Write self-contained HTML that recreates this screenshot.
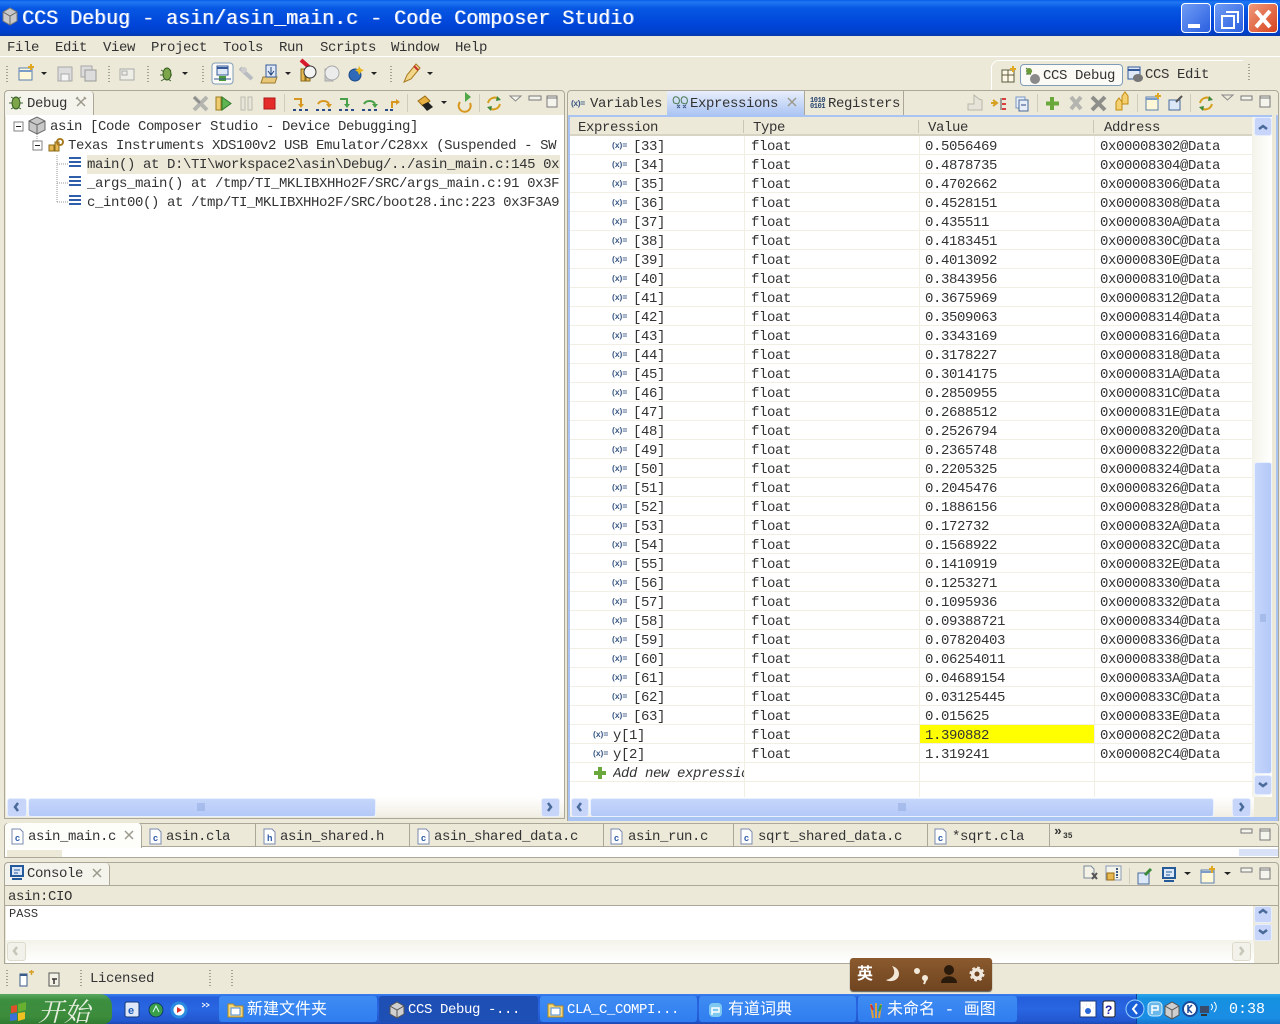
<!DOCTYPE html>
<html><head><meta charset="utf-8"><title>CCS Debug</title>
<style>
html,body{margin:0;padding:0;width:1280px;height:1024px;overflow:hidden;background:#ece9d8}
*{box-sizing:border-box}
body{position:relative;font:14px/16px "Liberation Mono","Noto Sans CJK SC",monospace;letter-spacing:-.4px;color:#333}
.a{position:absolute}
.t{position:absolute;white-space:pre;line-height:16px;height:16px;margin-top:1px}
.title{position:absolute;left:0;top:0;width:1280px;height:36px;background:linear-gradient(#0a5be8 0,#1f78f2 6%,#0758e4 22%,#0044d8 70%,#0040c8 92%,#0a3aa8 100%)}
.rows{position:absolute;left:570px;top:136px;width:682px}
.r{position:relative;height:19px;border-bottom:1px solid #f1efe4}
.r span{position:absolute;top:3px;white-space:pre}
.r i{position:absolute;top:3px;left:42px;font:bold 8.5px/12px "Liberation Sans",sans-serif;letter-spacing:0;color:#3c5a86}
.n{left:63px}.ty{left:181px}.v{left:355px}.ad{left:530px}
.panel{position:absolute;border:1px solid #aca899;background:#ece9d8;border-radius:4px 4px 0 0}
.white{position:absolute;background:#fff}
.sb{position:absolute;background:linear-gradient(#fff,#f1efe4)}
.thumbh{position:absolute;background:linear-gradient(#c6d6fb,#b4c9f8);border:1px solid #e9f0fe;border-radius:3px}
.btn{position:absolute;background:#c6d5f9;border:1px solid #e6edfd;border-radius:3px}
.wb{position:absolute;top:3px;width:30px;height:30px;border:1px solid #fff;border-radius:4px}
.tb{position:absolute;top:996px;height:26px;background:linear-gradient(#3f8cf3,#2f7df0);border-radius:3px;color:#fff;line-height:28px;white-space:pre;font-size:14px}
</style></head><body>

<div class="title"></div>
<div class="t" style="left:22px;top:8px;height:22px;line-height:22px;font-size:20px;letter-spacing:0;color:#fff;text-shadow:1px 0 0 rgba(255,255,255,.5)">CCS Debug - asin/asin_main.c - Code Composer Studio</div>
<div class="wb" style="left:1181px;background:linear-gradient(135deg,#6f9cf5,#2a5fe0)"></div>
<div class="wb" style="left:1214px;background:linear-gradient(135deg,#6f9cf5,#2a5fe0)"></div>
<div class="wb" style="left:1248px;background:linear-gradient(135deg,#ee9a7c,#d8431e)"></div>

<div class="t" style="left:7px;top:39px">File</div>
<div class="t" style="left:55px;top:39px">Edit</div>
<div class="t" style="left:103px;top:39px">View</div>
<div class="t" style="left:151px;top:39px">Project</div>
<div class="t" style="left:223px;top:39px">Tools</div>
<div class="t" style="left:279px;top:39px">Run</div>
<div class="t" style="left:320px;top:39px">Scripts</div>
<div class="t" style="left:391px;top:39px">Window</div>
<div class="t" style="left:455px;top:39px">Help</div>
<div class="a" style="left:0;top:56px;width:1280px;height:1px;background:#fff"></div>

<!-- perspective switcher -->
<div class="a" style="left:991px;top:60px;width:252px;height:30px;border:1px solid #fff;border-bottom:0;border-right:0;border-radius:8px 0 0 0"></div>
<div class="a" style="left:1020px;top:64px;width:103px;height:22px;background:#fbfaf5;border:1px solid #7f9db9;border-radius:4px"></div>
<div class="t" style="left:1043px;top:67px">CCS Debug</div>
<div class="t" style="left:1145px;top:66px">CCS Edit</div>

<!-- left panel -->
<div class="panel" style="left:4px;top:90px;width:561px;height:729px"></div>
<div class="a" style="left:5px;top:91px;width:89px;height:25px;background:#f5f4ec;border-right:1px solid #aca899;border-radius:4px 4px 0 0"></div>
<div class="t" style="left:27px;top:95px">Debug</div>
<div class="white" style="left:6px;top:115px;width:558px;height:682px"></div>
<div class="a" style="left:6px;top:115px;width:554px;height:702px;overflow:hidden">
  <div class="a" style="left:81px;top:40px;width:473px;height:19px;background:#ece9d8"></div>
  <div class="t" style="left:44px;top:3px">asin [Code Composer Studio - Device Debugging]</div>
  <div class="t" style="left:62px;top:22px">Texas Instruments XDS100v2 USB Emulator/C28xx (Suspended - SW</div>
  <div class="t" style="left:81px;top:41px">main() at D:\TI\workspace2\asin\Debug/../asin_main.c:145 0x</div>
  <div class="t" style="left:81px;top:60px">_args_main() at /tmp/TI_MKLIBXHHo2F/SRC/args_main.c:91 0x3F</div>
  <div class="t" style="left:81px;top:79px">c_int00() at /tmp/TI_MKLIBXHHo2F/SRC/boot28.inc:223 0x3F3A9</div>
</div>
<div class="sb" style="left:6px;top:797px;width:558px;height:20px"></div>
<div class="btn" style="left:7px;top:798px;width:20px;height:19px"></div>
<div class="thumbh" style="left:28px;top:798px;width:348px;height:19px"></div>
<div class="btn" style="left:541px;top:798px;width:19px;height:19px"></div>

<!-- right panel -->
<div class="panel" style="left:567px;top:90px;width:712px;height:731px;border-color:#aca899"></div>
<div class="a" style="left:667px;top:91px;width:138px;height:25px;background:linear-gradient(#e9effc,#a9c3f3);border-right:1px solid #aca899"></div>
<div class="a" style="left:805px;top:91px;width:99px;height:24px;border-right:1px solid #aca899"></div>
<div class="a" style="left:568px;top:115px;width:710px;height:2px;background:#a9c3f3"></div>
<div class="a" style="left:568px;top:115px;width:2px;height:706px;background:#a9c3f3"></div>
<div class="a" style="left:1272px;top:115px;width:6px;height:706px;background:#ece9d8;border-right:2px solid #a9c3f3"></div>
<div class="a" style="left:568px;top:817px;width:710px;height:4px;background:#a9c3f3"></div>
<div class="t" style="left:590px;top:95px">Variables</div>
<div class="t" style="left:690px;top:95px">Expressions</div>
<div class="t" style="left:828px;top:95px">Registers</div>

<div class="white" style="left:570px;top:117px;width:702px;height:680px"></div>
<div class="a" style="left:570px;top:117px;width:683px;height:19px;background:#ece9d8;border-bottom:2px solid #d8d4c4"></div>
<div class="t" style="left:578px;top:119px">Expression</div>
<div class="t" style="left:753px;top:119px">Type</div>
<div class="t" style="left:928px;top:119px">Value</div>
<div class="t" style="left:1104px;top:119px">Address</div>
<div class="a" style="left:743px;top:120px;width:1px;height:13px;background:#cbc7b8"></div>
<div class="a" style="left:918px;top:120px;width:1px;height:13px;background:#cbc7b8"></div>
<div class="a" style="left:1093px;top:120px;width:1px;height:13px;background:#cbc7b8"></div>

<div class="a" style="left:920px;top:725px;width:174px;height:18px;background:#ff0"></div>
<div class="rows">
<div class="r"><i>(x)=</i><span class="n">[33]</span><span class="ty">float</span><span class="v">0.5056469</span><span class="ad">0x00008302@Data</span></div>
<div class="r"><i>(x)=</i><span class="n">[34]</span><span class="ty">float</span><span class="v">0.4878735</span><span class="ad">0x00008304@Data</span></div>
<div class="r"><i>(x)=</i><span class="n">[35]</span><span class="ty">float</span><span class="v">0.4702662</span><span class="ad">0x00008306@Data</span></div>
<div class="r"><i>(x)=</i><span class="n">[36]</span><span class="ty">float</span><span class="v">0.4528151</span><span class="ad">0x00008308@Data</span></div>
<div class="r"><i>(x)=</i><span class="n">[37]</span><span class="ty">float</span><span class="v">0.435511</span><span class="ad">0x0000830A@Data</span></div>
<div class="r"><i>(x)=</i><span class="n">[38]</span><span class="ty">float</span><span class="v">0.4183451</span><span class="ad">0x0000830C@Data</span></div>
<div class="r"><i>(x)=</i><span class="n">[39]</span><span class="ty">float</span><span class="v">0.4013092</span><span class="ad">0x0000830E@Data</span></div>
<div class="r"><i>(x)=</i><span class="n">[40]</span><span class="ty">float</span><span class="v">0.3843956</span><span class="ad">0x00008310@Data</span></div>
<div class="r"><i>(x)=</i><span class="n">[41]</span><span class="ty">float</span><span class="v">0.3675969</span><span class="ad">0x00008312@Data</span></div>
<div class="r"><i>(x)=</i><span class="n">[42]</span><span class="ty">float</span><span class="v">0.3509063</span><span class="ad">0x00008314@Data</span></div>
<div class="r"><i>(x)=</i><span class="n">[43]</span><span class="ty">float</span><span class="v">0.3343169</span><span class="ad">0x00008316@Data</span></div>
<div class="r"><i>(x)=</i><span class="n">[44]</span><span class="ty">float</span><span class="v">0.3178227</span><span class="ad">0x00008318@Data</span></div>
<div class="r"><i>(x)=</i><span class="n">[45]</span><span class="ty">float</span><span class="v">0.3014175</span><span class="ad">0x0000831A@Data</span></div>
<div class="r"><i>(x)=</i><span class="n">[46]</span><span class="ty">float</span><span class="v">0.2850955</span><span class="ad">0x0000831C@Data</span></div>
<div class="r"><i>(x)=</i><span class="n">[47]</span><span class="ty">float</span><span class="v">0.2688512</span><span class="ad">0x0000831E@Data</span></div>
<div class="r"><i>(x)=</i><span class="n">[48]</span><span class="ty">float</span><span class="v">0.2526794</span><span class="ad">0x00008320@Data</span></div>
<div class="r"><i>(x)=</i><span class="n">[49]</span><span class="ty">float</span><span class="v">0.2365748</span><span class="ad">0x00008322@Data</span></div>
<div class="r"><i>(x)=</i><span class="n">[50]</span><span class="ty">float</span><span class="v">0.2205325</span><span class="ad">0x00008324@Data</span></div>
<div class="r"><i>(x)=</i><span class="n">[51]</span><span class="ty">float</span><span class="v">0.2045476</span><span class="ad">0x00008326@Data</span></div>
<div class="r"><i>(x)=</i><span class="n">[52]</span><span class="ty">float</span><span class="v">0.1886156</span><span class="ad">0x00008328@Data</span></div>
<div class="r"><i>(x)=</i><span class="n">[53]</span><span class="ty">float</span><span class="v">0.172732</span><span class="ad">0x0000832A@Data</span></div>
<div class="r"><i>(x)=</i><span class="n">[54]</span><span class="ty">float</span><span class="v">0.1568922</span><span class="ad">0x0000832C@Data</span></div>
<div class="r"><i>(x)=</i><span class="n">[55]</span><span class="ty">float</span><span class="v">0.1410919</span><span class="ad">0x0000832E@Data</span></div>
<div class="r"><i>(x)=</i><span class="n">[56]</span><span class="ty">float</span><span class="v">0.1253271</span><span class="ad">0x00008330@Data</span></div>
<div class="r"><i>(x)=</i><span class="n">[57]</span><span class="ty">float</span><span class="v">0.1095936</span><span class="ad">0x00008332@Data</span></div>
<div class="r"><i>(x)=</i><span class="n">[58]</span><span class="ty">float</span><span class="v">0.09388721</span><span class="ad">0x00008334@Data</span></div>
<div class="r"><i>(x)=</i><span class="n">[59]</span><span class="ty">float</span><span class="v">0.07820403</span><span class="ad">0x00008336@Data</span></div>
<div class="r"><i>(x)=</i><span class="n">[60]</span><span class="ty">float</span><span class="v">0.06254011</span><span class="ad">0x00008338@Data</span></div>
<div class="r"><i>(x)=</i><span class="n">[61]</span><span class="ty">float</span><span class="v">0.04689154</span><span class="ad">0x0000833A@Data</span></div>
<div class="r"><i>(x)=</i><span class="n">[62]</span><span class="ty">float</span><span class="v">0.03125445</span><span class="ad">0x0000833C@Data</span></div>
<div class="r"><i>(x)=</i><span class="n">[63]</span><span class="ty">float</span><span class="v">0.015625</span><span class="ad">0x0000833E@Data</span></div>
<div class="r"><i style="left:23px">(x)=</i><span style="left:43px">y[1]</span><span class="ty">float</span><span class="v">1.390882</span><span class="ad">0x000082C2@Data</span></div>
<div class="r"><i style="left:23px">(x)=</i><span style="left:43px">y[2]</span><span class="ty">float</span><span class="v">1.319241</span><span class="ad">0x000082C4@Data</span></div>
<div class="r"><span style="left:43px;width:131px;overflow:hidden;font-style:italic">Add new expression</span></div>
<div class="r" style="border:0"></div>
</div>
<div class="a" style="left:744px;top:136px;width:1px;height:661px;background:#f1efe4"></div>
<div class="a" style="left:919px;top:136px;width:1px;height:661px;background:#f1efe4"></div>
<div class="a" style="left:1094px;top:136px;width:1px;height:661px;background:#f1efe4"></div>

<div class="a" style="left:1252px;top:117px;width:20px;height:680px;background:linear-gradient(90deg,#f4f3ea,#fff)"></div>
<div class="btn" style="left:1254px;top:117px;width:18px;height:19px"></div>
<div class="a" style="left:1254px;top:462px;width:18px;height:312px;background:linear-gradient(90deg,#c6d6fb,#b4c9f8);border:1px solid #e9f0fe;border-radius:3px"></div>
<div class="btn" style="left:1254px;top:775px;width:18px;height:20px"></div>

<div class="sb" style="left:570px;top:797px;width:684px;height:20px"></div>
<div class="btn" style="left:571px;top:798px;width:18px;height:19px"></div>
<div class="thumbh" style="left:590px;top:798px;width:624px;height:19px"></div>
<div class="btn" style="left:1232px;top:798px;width:19px;height:19px"></div>

<!-- editor tabs -->
<div class="panel" style="left:4px;top:823px;width:1275px;height:35px;background:#fff"></div>
<div class="a" style="left:5px;top:824px;width:1273px;height:23px;background:#ece9d8;border-bottom:1px solid #aca899;border-radius:4px 4px 0 0"></div>
<div class="a" style="left:5px;top:823px;width:137px;height:25px;background:#fdfdfa;border-right:1px solid #aca899;border-radius:4px 4px 0 0"></div>
<div class="a" style="left:7px;top:850px;width:55px;height:7px;background:#ece9d8"></div>
<div class="a" style="left:1239px;top:849px;width:39px;height:7px;background:#d9e2f7"></div>
<div class="a" style="left:255px;top:824px;width:1px;height:23px;background:#aca899"></div>
<div class="a" style="left:409px;top:824px;width:1px;height:23px;background:#aca899"></div>
<div class="a" style="left:603px;top:824px;width:1px;height:23px;background:#aca899"></div>
<div class="a" style="left:733px;top:824px;width:1px;height:23px;background:#aca899"></div>
<div class="a" style="left:927px;top:824px;width:1px;height:23px;background:#aca899"></div>
<div class="a" style="left:1049px;top:824px;width:1px;height:23px;background:#aca899"></div>
<div class="t" style="left:28px;top:828px">asin_main.c</div>
<div class="t" style="left:166px;top:828px">asin.cla</div>
<div class="t" style="left:280px;top:828px">asin_shared.h</div>
<div class="t" style="left:434px;top:828px">asin_shared_data.c</div>
<div class="t" style="left:628px;top:828px">asin_run.c</div>
<div class="t" style="left:758px;top:828px">sqrt_shared_data.c</div>
<div class="t" style="left:952px;top:828px">*sqrt.cla</div>
<div class="t" style="left:1054px;top:823px;font-size:13px;font-weight:bold;letter-spacing:0">»</div>
<div class="t" style="left:1063px;top:828px;font-size:8px;font-weight:bold;letter-spacing:0">35</div>

<!-- console -->
<div class="panel" style="left:4px;top:862px;width:1275px;height:102px"></div>
<div class="a" style="left:5px;top:863px;width:105px;height:23px;background:#f5f4ec;border-right:1px solid #aca899;border-bottom:1px solid #aca899;border-radius:4px 4px 0 0"></div>
<div class="a" style="left:110px;top:885px;width:1168px;height:1px;background:#aca899"></div>
<div class="t" style="left:27px;top:865px">Console</div>
<div class="t" style="left:8px;top:888px">asin:CIO</div>
<div class="a" style="left:5px;top:905px;width:1273px;height:1px;background:#aca899"></div>
<div class="white" style="left:6px;top:906px;width:1247px;height:34px"></div>
<div class="t" style="left:9px;top:905px;font-size:12px;letter-spacing:.1px">PASS</div>
<div class="a" style="left:6px;top:940px;width:1248px;height:23px;background:linear-gradient(#f4f3ea,#fff)"></div>
<div class="a" style="left:7px;top:942px;width:19px;height:19px;background:#f3f2ea;border:1px solid #dedbcb;border-radius:3px"></div>
<div class="a" style="left:1232px;top:942px;width:19px;height:19px;background:#f3f2ea;border:1px solid #dedbcb;border-radius:3px"></div>
<div class="btn" style="left:1254px;top:906px;width:18px;height:17px"></div>
<div class="btn" style="left:1254px;top:924px;width:18px;height:17px"></div>

<!-- status -->
<div class="t" style="left:90px;top:970px">Licensed</div>

<!-- IME -->
<div class="a" style="left:850px;top:958px;width:142px;height:33px;background:linear-gradient(#8b5a2e,#6f4420);border-radius:3px;box-shadow:0 1px 1px #555"></div>
<div class="t" style="left:857px;top:966px;font-size:16px;color:#fff;letter-spacing:0;font-weight:bold">英</div>

<!-- taskbar -->
<div class="a" style="left:0;top:994px;width:1280px;height:30px;background:linear-gradient(#3b82f0 0,#245edb 12%,#2a66e2 50%,#2257cf 90%,#1c48b0 100%)"></div>
<div class="a" style="left:0;top:994px;width:112px;height:30px;background:linear-gradient(#5aa860,#3c8f3f 20%,#3c8c3c 75%,#2f7a30);border-radius:0 12px 8px 0"></div>
<div class="t" style="left:38px;top:996px;height:28px;line-height:28px;font-size:26px;letter-spacing:0;color:#e8efe0;font-style:italic;font-family:'Noto Serif CJK SC',serif">开始</div>
<div class="tb" style="left:219px;width:158px;padding-left:28px;font-size:16px;letter-spacing:0">新建文件夹</div>
<div class="tb" style="left:379px;width:159px;padding-left:29px;background:#1d4fb5">CCS Debug -...</div>
<div class="tb" style="left:540px;width:157px;padding-left:27px">CLA_C_COMPI...</div>
<div class="tb" style="left:699px;width:157px;padding-left:29px;font-size:16px;letter-spacing:0">有道词典</div>
<div class="tb" style="left:858px;width:159px;padding-left:29px;font-size:16px;letter-spacing:0">未命名 - 画图</div>
<div class="a" style="left:1136px;top:994px;width:144px;height:30px;background:linear-gradient(#2aa6ee,#1590e0 15%,#1a8ee4 80%,#1673cc);border-left:1px solid #0e3f9a"></div>
<div class="t" style="left:1229px;top:1001px;color:#fff;letter-spacing:0;font-size:15px">0:38</div>

<!-- icons overlay -->
<svg class="a" style="left:0;top:0" width="1280" height="1024" viewBox="0 0 1280 1024" fill="none">
 <!-- app icon -->
 <path d="M3 12l7-4 7 4v9l-7 4-7-4z" fill="#c9c9c9" stroke="#777"/><path d="M3 12l7 4 7-4M10 16v9" stroke="#666"/>
 <!-- window buttons -->
 <rect x="1188" y="24" width="12" height="4" fill="#fff"/>
 <rect x="1222" y="16" width="12" height="12" stroke="#fff" stroke-width="2"/><path d="M1226 12h12v11" stroke="#fff" stroke-width="2"/>
 <path d="M1256 11l14 16M1270 11l-14 16" stroke="#fff" stroke-width="4"/>

 <!-- grips -->
 <g stroke="#a5a291" stroke-dasharray="1 2" stroke-width="2">
  <path d="M7 66v16M109 66v16M148 66v16M203 66v16M391 66v16M1249 64v16M7 970v16M81 970v16M210 970v16M232 970v16"/>
 </g>

 <!-- main toolbar -->
 <rect x="19" y="68" width="13" height="12" fill="#fff8d8" stroke="#5a7fb0"/><path d="M19 71h13" stroke="#7b9cc8" stroke-width="2"/><path d="M31 64v6M28 67h6" stroke="#e0a820" stroke-width="2"/>
 <path d="M41 72h6l-3 3z" fill="#222"/>
 <rect x="58" y="67" width="14" height="14" fill="#dcdcdc" stroke="#a8a8a8"/><rect x="61" y="74" width="8" height="7" fill="#f4f4f4" stroke="#aaa"/>
 <rect x="81" y="66" width="11" height="11" fill="#dcdcdc" stroke="#a8a8a8"/><rect x="85" y="70" width="11" height="11" fill="#dcdcdc" stroke="#9a9a9a"/>
 <rect x="120" y="69" width="14" height="11" fill="#efeee6" stroke="#aaa"/><rect x="122" y="71" width="5" height="4" stroke="#aaa"/>
 <path d="M161 70l5 3 5-3M160 75h12M161 81l5-3 5 3" stroke="#3f6a2e"/><ellipse cx="167" cy="74" rx="4" ry="6" fill="#7da64a" stroke="#2f5a1f"/>
 <path d="M182 72h6l-3 3z" fill="#222"/>
 <rect x="212" y="63" width="21" height="21" rx="3" fill="#fbfaf5" stroke="#7f9db9"/>
 <rect x="217" y="66" width="11" height="9" fill="#dfe8f6" stroke="#345a9a"/><path d="M217 68h11" stroke="#345a9a" stroke-width="2"/><rect x="219" y="76" width="7" height="5" fill="#4a9a3a"/><path d="M214 79h17" stroke="#345a9a"/>
 <path d="M240 68l12 11" stroke="#b8bcc0" stroke-width="4"/><circle cx="244" cy="70" r="3" fill="#ccc"/>
 <path d="M263 77h14l-2 6h-14z" fill="#e8c878" stroke="#9b7b2a"/><rect x="266" y="65" width="10" height="12" fill="#dfe8f6" stroke="#345a9a"/><path d="M271 67v7M268 71l3 4 3-4" stroke="#20407a"/>
 <path d="M285 72h6l-3 3z" fill="#222"/>
 <path d="M301 60l9 8" stroke="#d8192c" stroke-width="4"/><rect x="301" y="69" width="4" height="12" fill="#e8b850" stroke="#8a6a1a"/><rect x="306" y="73" width="4" height="8" fill="#e8b850" stroke="#8a6a1a"/><circle cx="310" cy="72" r="6" fill="#f4f4f4" stroke="#333"/>
 <rect x="325" y="69" width="8" height="12" fill="#c8c8c8" stroke="#aaa"/><circle cx="332" cy="73" r="7" fill="#ececec" stroke="#a8a8a8"/>
 <circle cx="355" cy="75" r="6" fill="#2e6ab8" stroke="#1e4a88"/><path d="M359 66l2 3 3 1-3 2-2 3-1-3-3-2 3-1z" fill="#e8b820"/>
 <path d="M371 72h6l-3 3z" fill="#222"/>
 <path d="M404 82l7-3 9-11-4-4-9 11z" fill="#f2d68a" stroke="#a87a20"/><path d="M414 66l4 4" stroke="#c83030" stroke-width="2"/>
 <path d="M427 72h6l-3 3z" fill="#222"/>

 <!-- perspective icons -->
 <rect x="1002" y="70" width="12" height="12" fill="#fff8e8" stroke="#5a5a3a"/><path d="M1002 75h12M1008 70v12" stroke="#5a5a3a"/><path d="M1013 66v6M1010 69h6" stroke="#e0a820" stroke-width="2"/>
 <path d="M1026 68l6 4M1026 74h5" stroke="#3f6a2e"/><circle cx="1029" cy="71" r="3" fill="#6d9a3a"/><ellipse cx="1035" cy="79" rx="5" ry="5" fill="#8a8a8a"/>
 <rect x="1128" y="67" width="12" height="12" fill="#dfe8f6" stroke="#345a9a"/><path d="M1128 70h12" stroke="#345a9a" stroke-width="2"/><ellipse cx="1138" cy="78" rx="5" ry="4" fill="#777"/>

 <!-- debug tab + toolbar -->
 <path d="M11 97l5 3 5-3M9 103h14M11 109l5-3 5 3" stroke="#3f6a2e"/><ellipse cx="16" cy="103" rx="4" ry="6" fill="#7da64a" stroke="#2f5a1f"/>
 <g stroke="#9c9a8c"><path d="M77 98l8 8M85 98l-8 8M78 97l-2 2M84 97l2 2" stroke-width="1.500"/></g>
 <path d="M194 97l13 13M207 97l-13 13" stroke="#b5b5b0" stroke-width="4"/><path d="M194 97l6 6" stroke="#8a8a88" stroke-width="2"/>
 <rect x="216" y="97" width="5" height="13" fill="#f0cc70" stroke="#9a7a20"/><path d="M222 97l9 6.500-9 6.500z" fill="#5eb552" stroke="#2d7a2a"/>
 <rect x="241" y="97" width="4" height="13" fill="#e8e6da" stroke="#bdbbad"/><rect x="248" y="97" width="4" height="13" fill="#e8e6da" stroke="#bdbbad"/>
 <rect x="264" y="98" width="11" height="11" fill="#e52a2a" stroke="#b01818"/>
 <g stroke-width="2">
  <path d="M294 99h7v6" stroke="#d89820"/><path d="M298 104l3 4 3-4z" fill="#d89820"/><path d="M293 110h3M299 110h3M305 110h3" stroke="#2a4a88"/>
  <path d="M318 104a6 5 0 0 1 11 0" stroke="#d89820"/><path d="M326 104l3 4 3-4z" fill="#d89820"/><path d="M316 110h3M322 110h3M328 110h3" stroke="#2a4a88"/>
  <path d="M340 99h7v6" stroke="#48a048"/><path d="M344 104l3 4 3-4z" fill="#48a048"/><path d="M339 110h3M345 110h3M351 110h3" stroke="#2a4a88"/>
  <path d="M364 104a6 5 0 0 1 11 0" stroke="#48a048"/><path d="M372 104l3 4 3-4z" fill="#48a048"/><path d="M362 110h3M368 110h3M374 110h3" stroke="#2a4a88"/>
  <path d="M392 108v-6h6" stroke="#d89820"/><path d="M396 99l4 3-4 3z" fill="#d89820"/><path d="M385 110h3M390 110h3" stroke="#2a4a88"/>
 </g>
 <path d="M284.500 94v18M407.500 94v18M479.500 94v18M1037.500 94v18M1137.500 94v18M1190.500 94v18" stroke="#cfccbb"/>
 <path d="M418 101l7-5 5 5-7 5z" fill="#e8b040" stroke="#9a6a10"/><path d="M422 105l6-3 5 5-6 4z" fill="#222"/>
 <path d="M441 101h6l-3 3z" fill="#222"/>
 <path d="M465 92v10l6-5z" fill="#50a848"/><path d="M460 102a6 6 0 1 0 10 1" stroke="#d89820" stroke-width="2"/>
 <g stroke="#d8a020" stroke-width="2"><path d="M488 103a7 7 0 0 1 11-4"/><path d="M500 104a7 7 0 0 1-11 4"/></g><path d="M497 96l4 4-5 1zM491 111l-4-4 5-1z" fill="#3f8a3a"/>
 <path d="M510 96h11l-5.500 5z" stroke="#888" fill="#f5f4ec"/>
 <rect x="529" y="96" width="12" height="4" fill="#f5f4ec" stroke="#777"/>
 <rect x="547" y="96" width="10" height="11" fill="#f5f4ec" stroke="#777"/><path d="M547 98h10" stroke="#777"/>

 <!-- tree -->
 <path d="M37 134v7M57 155v47M57 164h11M57 183h11M57 202h11" stroke="#9a9a9a" stroke-dasharray="1 1"/>
 <rect x="14" y="122" width="9" height="9" fill="#fff" stroke="#808080"/><path d="M16 126.500h5" stroke="#222"/>
 <rect x="33" y="141" width="9" height="9" fill="#fff" stroke="#808080"/><path d="M35 145.500h5" stroke="#222"/>
 <path d="M29 121l8-4 8 4v9l-8 4-8-4z" fill="#c8c8c8" stroke="#6a6a6a"/><path d="M29 121l8 4 8-4M37 125v9" stroke="#666"/>
 <rect x="49" y="145" width="5" height="6" fill="#e8b850" stroke="#8a6a1a"/><rect x="55" y="142" width="4" height="9" fill="#e8b850" stroke="#8a6a1a"/><circle cx="60" cy="142" r="3" stroke="#a87a20" stroke-width="2"/>
 <g stroke="#2e5fa8" stroke-width="2"><path d="M69 158h12M69 162h12M69 166h12"/><path d="M69 177h12M69 181h12M69 185h12"/><path d="M69 196h12M69 200h12M69 204h12"/></g>

 <!-- scrollbars -->
 <g stroke="#4a6a9a" stroke-width="2.500"><path d="M18 803l-3 4 3 4M548 803l3 4-3 4M581 803l-3 4 3 4M1240 803l3 4-3 4M1259 129l4-3 4 3M1259 783l4 3 4-3M1259 913l4-3 4 3M1259 930l4 3 4-3"/></g>
 <path d="M17 947l-3 4 3 4M1240 947l3 4-3 4" stroke="#c8c6b8" stroke-width="2.500"/>
 <path d="M198 803v8M200 803v8M202 803v8M204 803v8M899 803v8M901 803v8M903 803v8M905 803v8M1260 615h6M1260 617h6M1260 619h6M1260 621h6" stroke="#8fa8dc"/>

 <!-- right tabs -->
 <text x="571" y="106" font-family="Liberation Sans,sans-serif" font-size="8.500" font-weight="bold" fill="#3c5a86">(x)=</text>
 <path d="M674 103c-2-4 0-7 3-6s3 5 1 7zM682 103c-2-4 0-7 3-6s3 5 1 7z" stroke="#4a7a50"/><path d="M677 105l3 3M680 105l-3 3M683 105l3 3M686 105l-3 3" stroke="#3c5a86"/>
 <g stroke="#9c9a8c" stroke-width="1.500"><path d="M788 98l8 8M796 98l-8 8"/></g>
 <text x="810" y="102" font-family="Liberation Mono,monospace" font-size="7" font-weight="bold" fill="#24406e">1010</text>
 <text x="810" y="108" font-family="Liberation Mono,monospace" font-size="7" font-weight="bold" fill="#24406e">0101</text>

 <!-- right toolbar -->
 <path d="M968 104h6v-9l5 4 3 1v10h-14z" fill="#e6e4d8" stroke="#b8b6aa"/>
 <path d="M991 103h5M993 100l4 3-4 3" stroke="#d8a020" stroke-width="2"/><path d="M1001 98v12" stroke="#555"/><path d="M1002 99h4M1002 104h4M1002 109h4" stroke="#d84040" stroke-width="2"/>
 <rect x="1016" y="97" width="9" height="11" fill="#e8eef8" stroke="#7a98c4"/><rect x="1019" y="100" width="9" height="11" fill="#e8eef8" stroke="#4a6a9a"/><path d="M1021 105h5" stroke="#2a4a88"/>
 <path d="M1052 97v13M1046 103.500h13" stroke="#6aa83c" stroke-width="4"/>
 <path d="M1071 97l10 12M1081 97l-10 12" stroke="#b5b5b0" stroke-width="4"/>
 <path d="M1092 97l13 13M1105 97l-13 13" stroke="#8e8e8a" stroke-width="4"/>
 <path d="M1116 110v-8l3-4 3 4v8zM1122 104v-8l3-4 3 4v8z" fill="#f4d070" stroke="#c08a10"/>
 <rect x="1146" y="97" width="12" height="13" fill="#fff8d8" stroke="#5a7fb0"/><path d="M1146 99h12" stroke="#7b9cc8" stroke-width="2"/><path d="M1158 93v6M1155 96h6" stroke="#e0a820" stroke-width="2"/>
 <rect x="1169" y="100" width="11" height="10" fill="#dce8f8" stroke="#4a6a9a"/><path d="M1176 102l6-6" stroke="#555" stroke-width="2"/>
 <g stroke="#d8a020" stroke-width="2"><path d="M1200 103a7 7 0 0 1 11-4"/><path d="M1212 104a7 7 0 0 1-11 4"/></g><path d="M1209 96l4 4-5 1zM1203 111l-4-4 5-1z" fill="#3f8a3a"/>
 <path d="M1222 95h11l-5.500 5z" stroke="#888" fill="#ece9d8"/>
 <rect x="1241" y="96" width="11" height="4" fill="#f5f4ec" stroke="#777"/>
 <rect x="1260" y="96" width="10" height="11" fill="#f5f4ec" stroke="#777"/><path d="M1260 98h10" stroke="#777"/>

 <!-- add expression plus -->
 <path d="M600 767v12M594 773h12" stroke="#6aa83c" stroke-width="4"/>

 <!-- file icons in tabs -->
 <g fill="#fff" stroke="#7a8ab0">
  <path d="M12 829h8l3 3v12h-11z"/><path d="M150 829h8l3 3v12h-11z"/><path d="M264 829h8l3 3v12h-11z"/><path d="M418 829h8l3 3v12h-11z"/><path d="M611 829h8l3 3v12h-11z"/><path d="M741 829h8l3 3v12h-11z"/><path d="M935 829h8l3 3v12h-11z"/>
 </g>
 <g font-family="Liberation Sans,sans-serif" font-size="9" font-weight="bold" fill="#2a5aa8">
  <text x="15" y="841">c</text><text x="153" y="841">c</text><text x="267" y="841">h</text><text x="421" y="841">c</text><text x="614" y="841">c</text><text x="744" y="841">c</text><text x="938" y="841">c</text>
 </g>
 <g stroke="#9c9a8c" stroke-width="1.500"><path d="M125 831l8 8M133 831l-8 8"/><path d="M93 869l8 8M101 869l-8 8"/></g>
 <rect x="1241" y="829" width="11" height="4" fill="#f5f4ec" stroke="#777"/><rect x="1260" y="829" width="10" height="11" fill="#f5f4ec" stroke="#777"/><path d="M1260 831h10" stroke="#777"/>
 <rect x="1241" y="868" width="11" height="4" fill="#f5f4ec" stroke="#777"/><rect x="1260" y="868" width="10" height="11" fill="#f5f4ec" stroke="#777"/><path d="M1260 870h10" stroke="#777"/>

 <!-- console icons -->
 <rect x="11" y="866" width="12" height="10" fill="#dce8f8" stroke="#245a9a" stroke-width="2"/><path d="M14 870h6M14 873h4" stroke="#245a9a"/><path d="M12 879h10" stroke="#245a9a" stroke-width="2"/>
 <path d="M1084 866h7l3 3v9h-10z" fill="#f4f2e6" stroke="#7a8a9a"/><path d="M1092 873l5 6M1097 873l-5 6" stroke="#555" stroke-width="2"/>
 <rect x="1106" y="866" width="15" height="14" fill="#f4f4ea" stroke="#8a9ab8"/><rect x="1107" y="873" width="7" height="7" fill="#e8b850" stroke="#9a6a10"/><path d="M1117 868v10" stroke="#3c5a86" stroke-dasharray="2 1" stroke-width="2"/>
 <path d="M1129.500 868v16" stroke="#cfccbb"/>
 <rect x="1138" y="873" width="11" height="11" fill="#dce8f8" stroke="#4a6a9a"/><path d="M1145 875l6-6" stroke="#3a8a3a" stroke-width="3"/>
 <rect x="1163" y="868" width="12" height="10" fill="#dce8f8" stroke="#245a9a" stroke-width="2"/><path d="M1166 872h6M1166 875h4" stroke="#245a9a"/><path d="M1164 881h10" stroke="#245a9a" stroke-width="2"/>
 <path d="M1184 872h7l-3.500 3z" fill="#222"/>
 <rect x="1201" y="870" width="13" height="13" fill="#fff8d8" stroke="#5a7fb0"/><path d="M1201 872h13" stroke="#7b9cc8" stroke-width="2"/><path d="M1212 866v7M1209 869h6" stroke="#e0a820" stroke-width="2"/>
 <path d="M1224 872h7l-3.500 3z" fill="#222"/>

 <!-- status icons -->
 <rect x="20" y="974" width="7" height="12" fill="#fff" stroke="#3a5a8a"/><path d="M20 975h7" stroke="#3a5a8a" stroke-width="2"/><path d="M29 972h5M31.500 970v5" stroke="#d8a020" stroke-width="1.500"/>
 <rect x="49" y="973" width="10" height="13" fill="#f4f2e6" stroke="#555"/><path d="M52 979h5M54 979v5" stroke="#333" stroke-width="1.500"/>

 <!-- IME -->
 <path d="M892 966c4 5 3 12-6 14 5 3 13 0 13-6 0-4-3-7-7-8z" fill="#f3e9d8"/>
 <circle cx="917" cy="971" r="3" fill="#f3e9d8"/><circle cx="925" cy="978" r="3" fill="#f3e9d8"/><path d="M926 979l-2 5" stroke="#f3e9d8" stroke-width="2"/>
 <circle cx="949" cy="970" r="5" fill="#2a1a0c"/><path d="M941 983c0-9 16-9 16 0z" fill="#2a1a0c"/>
 <circle cx="977" cy="974" r="6" fill="#f0e8dc"/><circle cx="977" cy="974" r="6" stroke="#f0e8dc" stroke-width="3" stroke-dasharray="2.500 2.200"/><circle cx="977" cy="974" r="2.500" fill="#6f4420"/>

 <!-- start flag -->
 <g transform="translate(10,1002)"><path d="M1 4l6-1v7l-6 1z" fill="#e0502a"/><path d="M8 2l8-2v8l-8 2z" fill="#68b030"/><path d="M0 12l7-1v7l-7 1z" fill="#3a70d8"/><path d="M8 11l7-1v7l-7 2z" fill="#f0c020"/></g>
 <!-- quicklaunch -->
 <rect x="125" y="1002" width="14" height="15" rx="2" fill="#dfe8f8" stroke="#143a7a"/><text x="128" y="1014" font-family="Liberation Sans,sans-serif" font-size="11" font-weight="bold" fill="#1e5ab8">e</text>
 <circle cx="156" cy="1010" r="7" fill="#3aa048" stroke="#123a70"/><path d="M153 1012l3-6 3 6" stroke="#dff"/>
 <circle cx="179" cy="1010" r="7" fill="#fff" stroke="#2a8ae0" stroke-width="3"/><path d="M177 1007l5 3-5 3z" fill="#e03030"/>
 <path d="M202 1003l3 2-3 2M206 1003l3 2-3 2" stroke="#fff"/>
 <!-- task icons -->
 <g stroke="#b08a20"><path d="M228 1004h5l2 2h8v11h-15z" fill="#f8d878"/></g><path d="M231 1008h9v7h-9z" fill="#fff" stroke="#4a8ae0"/>
 <path d="M390 1006l7-4 7 4v8l-7 4-7-4z" fill="#d0d0d0" stroke="#555"/><path d="M390 1006l7 4 7-4M397 1010v8" stroke="#555"/>
 <g stroke="#b08a20"><path d="M548 1004h5l2 2h8v11h-15z" fill="#f8d878"/></g><path d="M551 1008h9v7h-9z" fill="#fff" stroke="#4a8ae0"/>
 <rect x="709" y="1003" width="13" height="14" rx="4" fill="#7fc8f0"/><path d="M712 1008h7v4h-7zM712 1012v3" stroke="#fff" stroke-width="1.500"/>
 <path d="M871 1004l2 14M876 1003v15M881 1004l-2 14" stroke-width="2" stroke="#d8a040"/><path d="M871 1005l2 5" stroke="#d83030" stroke-width="2"/><path d="M881 1005l-2 6" stroke="#30a040" stroke-width="2"/>
 <!-- tray -->
 <rect x="1080" y="1001" width="16" height="16" fill="#fff" stroke="#1a3a80"/><circle cx="1088" cy="1011" r="3" fill="#2a68d8"/><path d="M1083 1008h.1M1086 1005h.1M1090 1005h.1M1093 1008h.1" stroke="#2a68d8" stroke-width="3"/>
 <rect x="1103" y="1001" width="12" height="16" rx="2" fill="#fff" stroke="#222"/><text x="1105" y="1014" font-family="Liberation Sans,sans-serif" font-size="12" font-weight="bold" fill="#2020a0">?</text>
 <circle cx="1135" cy="1009" r="9" fill="#1a60d8" stroke="#9ad0ff"/><path d="M1137 1004l-4 5 4 5" stroke="#fff" stroke-width="2"/>
 <rect x="1148" y="1002" width="14" height="14" rx="4" fill="#6ab8ea" stroke="#d0eefe"/><path d="M1152 1006h6v4h-6zM1152 1010v4" stroke="#fff" stroke-width="1.500"/>
 <path d="M1165 1006l7-4 7 4v9l-7 4-7-4z" fill="#cfcfcf" stroke="#555"/><path d="M1165 1006l7 4 7-4M1172 1010v9" stroke="#555"/>
 <circle cx="1190" cy="1009" r="7" fill="#fff" stroke="#1a4a9a" stroke-width="2"/><path d="M1188 1005v8M1192 1005l-4 4 4 4" stroke="#1a4a9a" stroke-width="1.500"/>
 <rect x="1200" y="1006" width="9" height="7" fill="#3a4a6a"/><path d="M1201 1015h6" stroke="#333" stroke-width="2"/><path d="M1211 1004c2 2 2 4 0 6M1214 1002c3 3 3 7 0 10" stroke="#fff"/>
</svg>
</body></html>
